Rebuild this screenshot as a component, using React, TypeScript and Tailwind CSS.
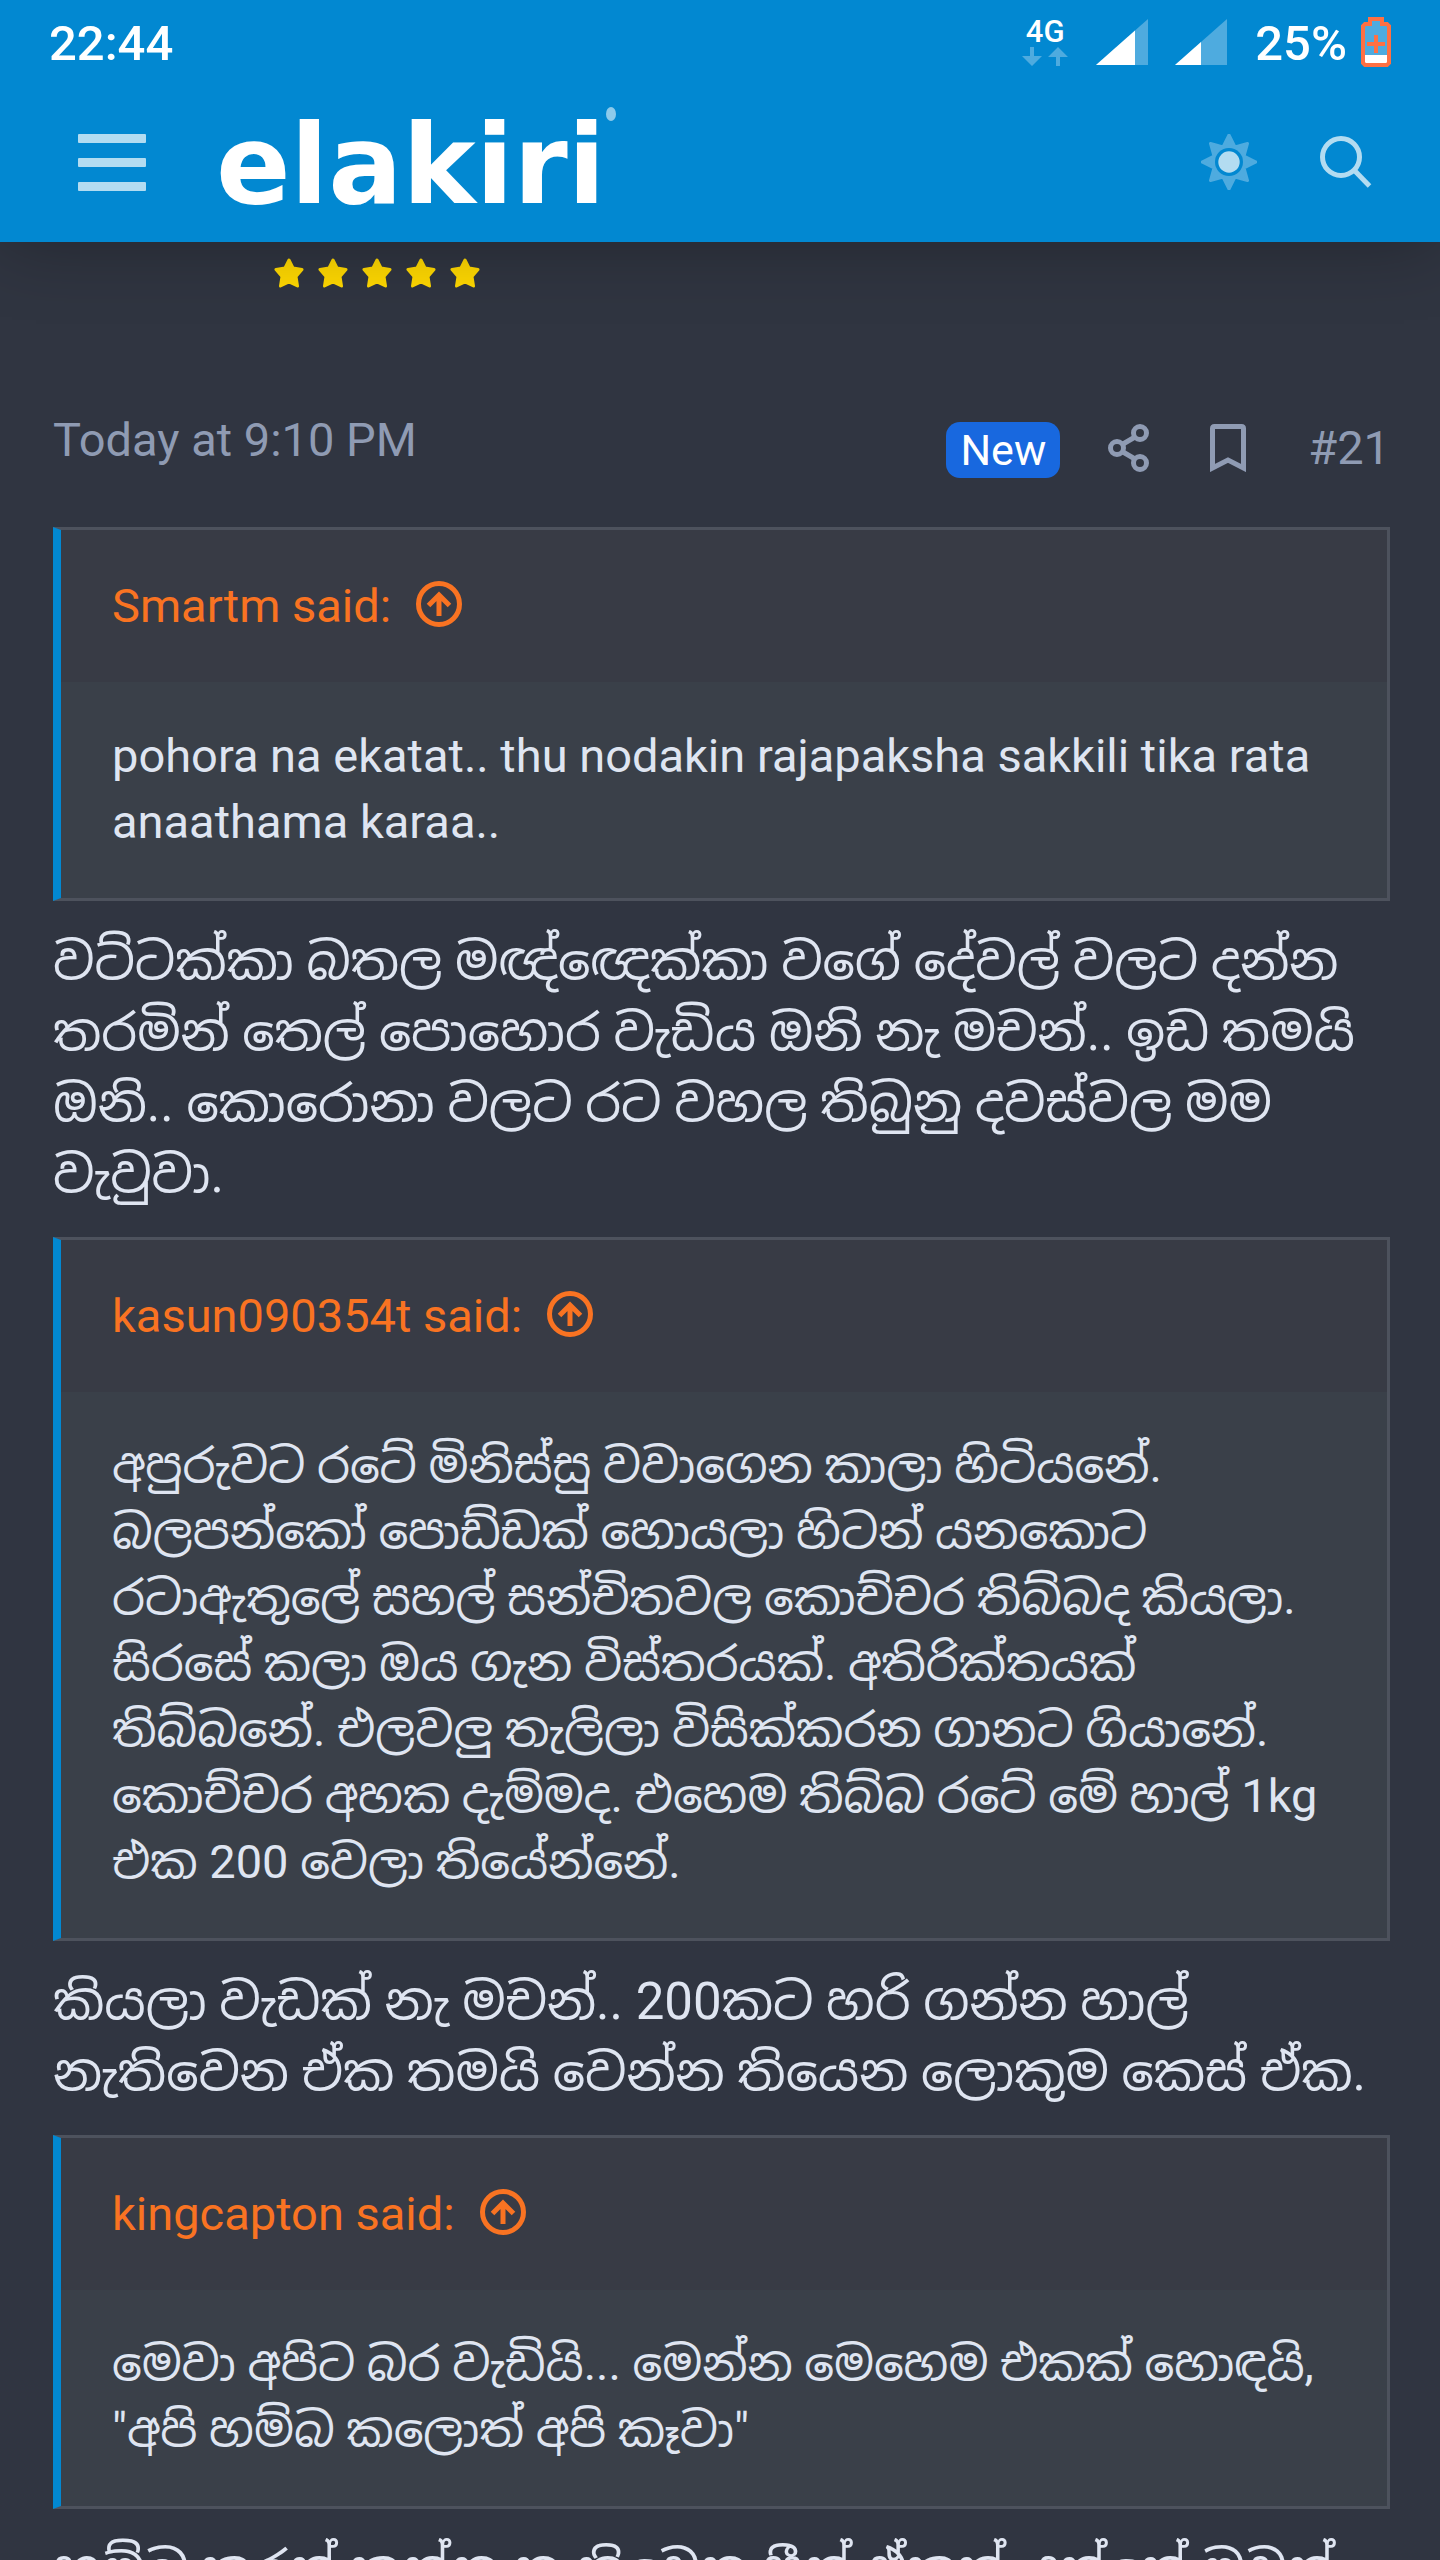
import React from "react";

type Quote = { author: string; lines: string[] };

const smartm: Quote = {
  author: "Smartm",
  lines: ["pohora na ekatat.. thu nodakin rajapaksha sakkili tika rata", "anaathama karaa.."],
};

const kasun: Quote = {
  author: "kasun090354t",
  lines: [
    "අපුරුවට රටේ මිනිස්සු වවාගෙන කාලා හිටියනේ.",
    "බලපන්කෝ පොඩ්ඩක් හොයලා හිටන් යනකොට",
    "රටාඇතුලේ සහල් සන්චිතවල කොච්චර තිබ්බද කියලා.",
    "සිරසේ කලා ඔය ගැන විස්තරයක්. අතිරික්තයක්",
    "තිබ්බනේ. එලවලු තැලිලා විසික්කරන ගානට ගියානේ.",
    "කොච්චර අහක දැම්මද. එහෙම තිබ්බ රටේ මේ හාල් 1kg",
    "එක 200 වෙලා තියේන්නේ.",
  ],
};

const kingcapton: Quote = {
  author: "kingcapton",
  lines: ["මෙවා අපිට බර වැඩියි... මෙන්න මෙහෙම එකක් හොඳයි,", "\"අපි හම්බ කලොත් අපි කෑවා\""],
};

function Lines({ lines }: { lines: string[] }) {
  return (
    <>
      {lines.map((line) => (
        <span key={line} className="block whitespace-nowrap">
          {line}
        </span>
      ))}
    </>
  );
}

function Signal({ level }: { level: number }) {
  return (
    <svg viewBox="0 0 52 46" className="h-[46px] w-[52px]">
      <path d="M0 46L52 0V46Z" fill="#4eabdf" />
      <path d={`M0 46L${level} ${46 - (level * 46) / 52}V46Z`} fill="#fff" />
    </svg>
  );
}

function StatusBar() {
  return (
    <div className="flex h-[88px] items-center justify-between pr-[49px] pl-[49px] text-[49px] font-medium text-white">
      <span>22:44</span>
      <div className="flex items-center">
        <div className="flex w-[46px] flex-col items-center gap-1">
          <span className="text-[31px] leading-[22px]">4G</span>
          <svg viewBox="0 0 46 20" className="h-5 w-[46px]" fill="#4eabdf">
            <path d="M8 0h4v9h8l-10 10L0 9h8z" />
            <path d="M34 19h4V10h8L36 0 26 10h8z" />
          </svg>
        </div>
        <div className="mb-1 ml-7 flex gap-[27px]">
          <Signal level={39} />
          <Signal level={26} />
        </div>
        <span className="ml-7">25%</span>
        <svg viewBox="0 0 30 50" className="mb-1 ml-[14px] h-[50px] w-[30px]">
          <path d="M9 2h12v5h4l3 3v35l-2 3H4l-2-3V10l3-3h4z" fill="#4eabdf" />
          <path d="M4 38h22v8H4z" fill="#fff" />
          <path d="M9 2h12v5h5l2 2v37l-2 2H4l-2-2V9l2-2h5z" fill="none" stroke="#ff7043" strokeWidth="4" />
          <path d="M13 18h4v7h7v4h-7v7h-4v-7H6v-4h7z" fill="#ff7043" />
        </svg>
      </div>
    </div>
  );
}

function Header() {
  return (
    <header className="relative bg-[#0288d1] shadow-[0_0_72px_rgba(0,0,0,0.3)]">
      <StatusBar />
      <div className="flex h-[154px] items-center pr-[68px] pl-[78px]">
        <button type="button" aria-label="Menu" className="mb-1.5">
          <svg viewBox="0 0 68 57" className="h-[57px] w-[68px]" fill="#b3dcf1">
            <rect width="68" height="9" rx="1" />
            <rect y="24" width="68" height="9" rx="1" />
            <rect y="48" width="68" height="9" rx="1" />
          </svg>
        </button>
        <a href="#" className="ml-[70px] flex font-['DejaVu_Sans'] text-[110px] leading-[120px] font-bold text-white">
          elakiri
          <svg viewBox="0 0 12 18" className="h-[18px] w-3">
            <ellipse cx="6" cy="9" rx="5" ry="7" fill="#8dcaeb" />
          </svg>
        </a>
        <div className="mb-1.5 ml-auto flex items-center gap-[63px]">
          <button type="button" aria-label="Light style">
            <svg viewBox="-28 -28 56 56" className="size-14">
              <g fill="#4eabdf" stroke="#4eabdf" strokeWidth="3" strokeLinejoin="round">
                <path d="M0-27L6-15 18.5-18.5 15-6 27 0 15 6 18.5 18.5 6 15 0 27-6 15-18.5 18.5-15 6-27 0-15-6-18.5-18.5-6-15Z" />
              </g>
              <circle r="14" fill="#0288d1" />
              <circle r="10.7" fill="#b3dcf1" />
            </svg>
          </button>
          <button type="button" aria-label="Search">
            <svg viewBox="0 0 52 52" className="size-[52px]" fill="none" stroke="#b3dcf1" strokeWidth="5">
              <circle cx="21" cy="21" r="18.5" />
              <path d="M34.5 34.5L49.5 50" />
            </svg>
          </button>
        </div>
      </div>
    </header>
  );
}

function QuoteBlock({ author, lines }: Quote) {
  return (
    <blockquote className="border-[3px] border-l-8 border-[#4d525d] border-l-[#0288d1] bg-[#3a4049] text-[47px]">
      <a href="#" className="flex h-[152px] items-center gap-6 bg-[#383b45] px-[51px] text-[#f97322]">
        {author} said:
        <svg viewBox="0 0 48 48" className="mb-1 size-12" fill="none" stroke="currentColor" strokeWidth="5">
          <circle cx="24" cy="24" r="20.5" />
          <path d="M24 36V15M13.5 25.5L24 15l10.5 10.5" />
        </svg>
      </a>
      <p className="px-[51px] pt-[41px] pb-[43px] leading-[66px]">
        <Lines lines={lines} />
      </p>
    </blockquote>
  );
}

function Reply({ lines }: { lines: string[] }) {
  return (
    <p className="pt-[25px] pb-[27px] text-[51px] leading-[71px]">
      <Lines lines={lines} />
    </p>
  );
}

export default function App() {
  return (
    <div className="h-screen overflow-hidden bg-[#303541] font-[Roboto,'Noto_Sans_Sinhala','Noto_Sans',sans-serif] text-[#dfe5f1]">
      <Header />

      <div className="flex gap-[14px] pt-4 pl-[274px]">
        {[1, 2, 3, 4, 5].map((star) => (
          <svg key={star} viewBox="0 0 30 30" className="size-[30px]" fill="#ffd800" stroke="#ffd800" strokeWidth="3" strokeLinejoin="round">
            <path d="M15 2L19 10 28 11.500 22 18.500 23.500 28 15 24 6.500 28 8 18.500 2 11.500 11 10Z" />
          </svg>
        ))}
      </div>

      <article className="pt-[115px] pr-[50px] pl-[53px]">
        <div className="mb-[34px] flex h-[90px] items-center justify-between text-[47px] text-[#8f9bb3]">
          <time className="mb-4">Today at 9:10 PM</time>
          <div className="flex items-center">
            <span className="mt-1 rounded-[14px] bg-[#1868df] px-[14px] text-[43px] leading-[56px] text-white">New</span>
            <button type="button" aria-label="Share" className="ml-12">
              <svg viewBox="0 0 42 48" className="h-12 w-[42px]" fill="none" stroke="currentColor" strokeWidth="5">
                <circle cx="9" cy="24" r="6.500" />
                <circle cx="32" cy="9" r="6.500" />
                <circle cx="32" cy="39" r="6.500" />
                <path d="M15 20l12-7M15 28l12 7" />
              </svg>
            </button>
            <button type="button" aria-label="Bookmark" className="ml-[60px]">
              <svg viewBox="0 0 36 48" className="h-12 w-9" fill="none" stroke="currentColor" strokeWidth="5">
                <path d="M2.500 44V4.500q0-2 2-2h27q2 0 2 2V44L18 36Z" />
              </svg>
            </button>
            <a href="#" className="ml-[62px]">#21</a>
          </div>
        </div>

        <QuoteBlock {...smartm} />
        <Reply
          lines={[
            "වට්ටක්කා බතල මඥ්ඥෙක්කා වගේ දේවල් වලට දන්න",
            "තරමින් තෙල් පොහොර වැඩිය ඔනි නැ මචන්.. ඉඩ තමයි",
            "ඔනි.. කොරොනා වලට රට වහල තිබුනු දවස්වල මම",
            "වැවුවා.",
          ]}
        />
        <QuoteBlock {...kasun} />
        <Reply lines={["කියලා වැඩක් නැ මචන්.. 200කට හරි ගන්න හාල්", "නැතිවෙන ඒක තමයි වෙන්න තියෙන ලොකුම කෙස් ඒක."]} />
        <QuoteBlock {...kingcapton} />
        <Reply lines={["හම්බ කරන් කන්න නැතිවෙන සීන් ඒකත්, දන්නේ මචන්"]} />
      </article>
    </div>
  );
}
